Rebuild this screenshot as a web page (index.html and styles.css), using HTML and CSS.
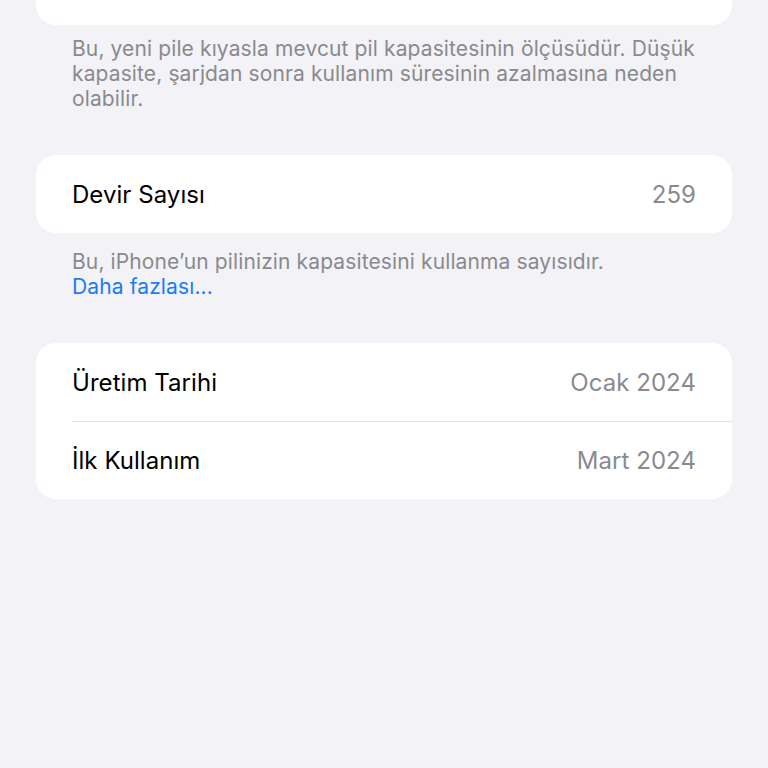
FILE: index.html
```html
<!DOCTYPE html>
<html lang="tr">
<head>
<meta charset="utf-8">
<title>Pil Durumu</title>
<link rel="stylesheet" href="styles.css">
</head>
<body>
<main class="page">
  <section class="group group-first">
    <div class="card">
      <div class="row">
        <span class="label">Maksimum Kapasite</span>
        <span class="value">%86</span>
      </div>
    </div>
    <p class="footer">Bu, yeni pile kıyasla mevcut pil kapasitesinin ölçüsüdür. Düşük kapasite, şarjdan sonra kullanım süresinin azalmasına neden olabilir.</p>
  </section>

  <section class="group">
    <div class="card">
      <div class="row">
        <span class="label">Devir Sayısı</span>
        <span class="value">259</span>
      </div>
    </div>
    <p class="footer footer-link">Bu, iPhone’un pilinizin kapasitesini kullanma sayısıdır.<br><a class="link" href="#">Daha fazlası...</a></p>
  </section>

  <section class="group">
    <div class="card">
      <div class="row">
        <span class="label">Üretim Tarihi</span>
        <span class="value">Ocak 2024</span>
      </div>
      <div class="row row-sep">
        <span class="label">İlk Kullanım</span>
        <span class="value">Mart 2024</span>
      </div>
    </div>
  </section>
</main>
</body>
</html>
```

FILE: styles.css
```css
* { box-sizing: border-box; }

html, body {
  margin: 0;
  padding: 0;
  background: #f2f2f7;
  height: 100%;
}

body {
  font-family: Inter, "Noto Sans", "Liberation Sans", sans-serif;
  color: #000;
  -webkit-font-smoothing: antialiased;
}

.page {
  display: flex;
  flex-direction: column;
  padding: 0 36px;
  gap: 43px;
}

.group-first {
  margin-top: -53px;
}

.card {
  background: #fff;
  border-radius: 20px;
  overflow: hidden;
}

.row {
  height: 78px;
  display: flex;
  align-items: center;
  justify-content: space-between;
  padding: 0 36px;
  font-size: 24px;
  letter-spacing: 0.05px;
  position: relative;
}

.row-sep::before {
  content: "";
  position: absolute;
  top: 0;
  left: 36px;
  right: 0;
  height: 1px;
  background: #e3e3e6;
}

.label { color: #000; }

.value { color: #8a8a8e; }

.footer {
  margin: 0;
  padding: 11px 36px 1px;
  font-size: 21px;
  line-height: 25px;
  letter-spacing: 0.12px;
  color: #8a8a8e;
}

.footer-link {
  padding-top: 16px;
}

.link {
  color: #1a7cf5;
  text-decoration: none;
}
```
